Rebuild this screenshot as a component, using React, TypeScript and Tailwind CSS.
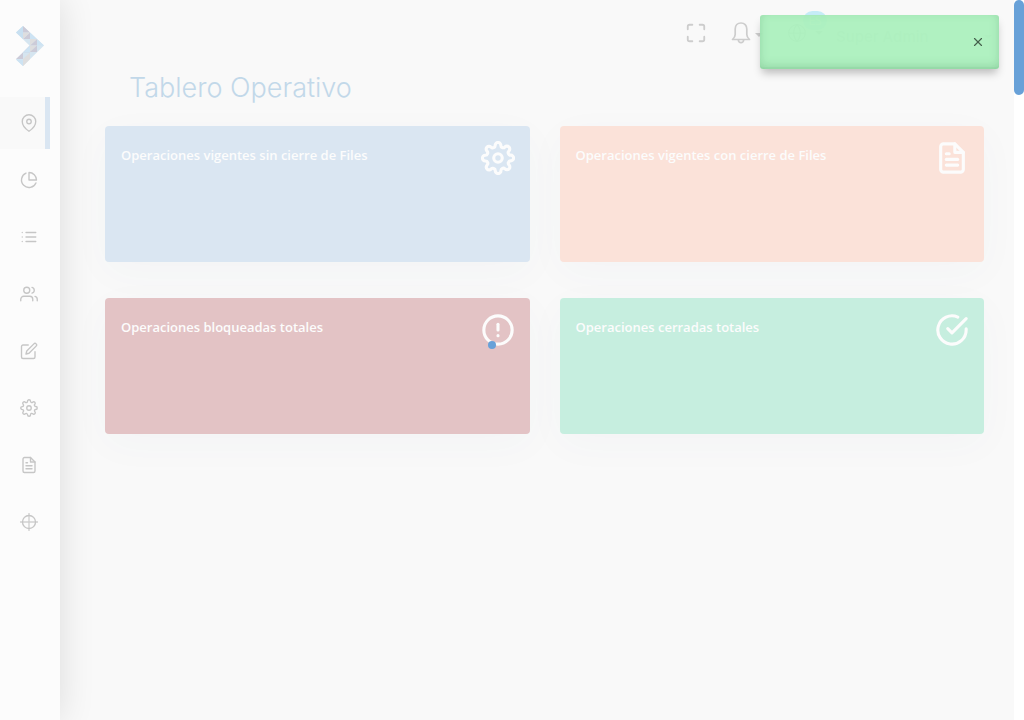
import type { IconType } from "react-icons";
import {
  FiAlertCircle,
  FiCheckCircle,
  FiEdit,
  FiFileText,
  FiGlobe,
  FiList,
  FiMapPin,
  FiMaximize,
  FiPieChart,
  FiSettings,
  FiUsers,
  FiX,
} from "react-icons/fi";

type NavIcon = (props: { size?: number; strokeWidth?: number }) => React.ReactNode;

function Target({ size = 18, strokeWidth = 2 }: { size?: number; strokeWidth?: number }) {
  return (
    <svg viewBox="0 0 24 24" width={size} height={size} fill="none" stroke="currentColor" strokeWidth={strokeWidth} aria-hidden="true">
      <circle cx="12" cy="12" r="8.700" />
      <path d="M12 0v24M0 12h24" opacity="0.8" />
    </svg>
  );
}

const navItems: { label: string; icon: IconType | NavIcon }[] = [
  { label: "Tablero", icon: FiMapPin },
  { label: "Reportes", icon: FiPieChart },
  { label: "Listados", icon: FiList },
  { label: "Usuarios", icon: FiUsers },
  { label: "Edición", icon: FiEdit },
  { label: "Configuración", icon: FiSettings },
  { label: "Archivos", icon: FiFileText },
  { label: "Seguimiento", icon: Target },
];

const cards: { title: string; icon: IconType; color: string }[] = [
  { title: "Operaciones vigentes sin cierre de Files", icon: FiSettings, color: "bg-[#dae6f2]" },
  { title: "Operaciones vigentes con cierre de Files", icon: FiFileText, color: "bg-[#fbe2d9]" },
  { title: "Operaciones bloqueadas totales", icon: FiAlertCircle, color: "bg-[#e3c3c5]" },
  { title: "Operaciones cerradas totales", icon: FiCheckCircle, color: "bg-[#c6eedf]" },
];

function Logo() {
  return (
    <svg viewBox="0 0 28 40" className="h-10 w-7" aria-hidden="true">
      <path d="M0 6.500 7 0 28 19.500 7 40 0 33.500 13.500 19.500z" fill="#d5e5f0" />
      <path d="M7 0v13l-7-6.500z" fill="#c8e0f1" />
      <path d="M7 0 14 6.500H7zM14 6.500V13H7zM14 19.500 21 13V19.500zM14 19.500 7 26.500H14zM7 26.500V33H0z" fill="#cccbd8" />
      <path d="M7 6.500H14L7 13zM14 13H21L14 19.500zM14 19.500H21L14 26.500zM7 33 14 26.500V33zM7 33H14L7 40z" fill="#dededf" />
      <path d="M14 6.500 21 13H14zM21 13 28 19.500H21zM7 26.500 14 19.500V26.500zM0 33.500H7V40z" fill="#cde3f3" />
      <path d="M21 19.500V26H14z" fill="#cccbd8" />
    </svg>
  );
}

function Bell() {
  return (
    <svg viewBox="0 0 20 22" width="20" height="22" fill="none" stroke="currentColor" strokeWidth="1.700" strokeLinejoin="round" aria-hidden="true">
      <path d="M10 1C6.500 1 4.200 3.500 4.200 7v5.500c0 2.200-1.200 3.600-2.700 5h17c-1.500-1.400-2.700-2.800-2.700-5V7c0-3.500-2.300-6-5.800-6zM7.300 18c.2 1.600 1.200 2.700 2.700 2.700s2.500-1.100 2.700-2.700" />
    </svg>
  );
}

function Caret() {
  return (
    <svg viewBox="0 0 8 4" className="h-1 w-2" aria-hidden="true">
      <path d="M0 0h8L4 4z" fill="currentColor" />
    </svg>
  );
}

function Sidebar() {
  return (
    <aside className="z-10 w-[60px] shrink-0 bg-[#fcfcfc] shadow-[0_0_36px_rgba(0,0,0,0.12)]">
      <a href="#inicio" aria-label="Inicio" className="flex h-[92px] items-center justify-center">
        <Logo />
      </a>
      <nav aria-label="Principal" className="mt-[5px] flex w-[50px] flex-col gap-[5px]">
        {navItems.map(({ label, icon: Icon }, i) => (
          <a
            key={label}
            href={`#${label}`}
            aria-label={label}
            className={
              i === 0
                ? "flex h-[52px] items-center border-r-[5px] border-[#dae6f2] bg-[#f9f9f9] pl-5 text-[#c6c6c6]"
                : "flex h-[52px] items-center pl-5 text-[#c6c6c6]"
            }
          >
            <Icon size={18} strokeWidth={1.8} />
          </a>
        ))}
      </nav>
    </aside>
  );
}

function Header() {
  return (
    <header className="flex h-[66px] items-center justify-end pr-[22px] text-[#cdcdcd]">
      <button type="button" aria-label="Pantalla completa">
        <FiMaximize size={22} />
      </button>
      <button type="button" aria-label="Notificaciones" className="ml-6 flex items-center gap-1">
        <Bell />
        <span className="pt-1"><Caret /></span>
      </button>
      <span className="ml-2 h-4 w-px bg-[#f0f0f0]" />
      <button type="button" aria-label="Idioma" className="relative ml-[15px] flex items-center gap-2">
        <FiGlobe size={20} strokeWidth={1.5} />
        <span className="absolute -top-3 left-4 flex h-[19px] w-6 items-center justify-center rounded-full bg-[#c5ecf7] text-xs text-white">
          ES
        </span>
        <Caret />
      </button>
      <button type="button" className="ml-[13px] flex w-[156px] items-center justify-between pt-2 font-['Inter',sans-serif] text-[15px] font-medium text-[#d8d8d8]">
        Super Admin
        <Caret />
      </button>
    </header>
  );
}

export default function App() {
  return (
    <div className="flex min-h-screen bg-[#f9f9f9] font-['Open_Sans','Noto_Sans',sans-serif]">
      <Sidebar />
      <div className="min-w-0 flex-1">
        <Header />
        <main className="pr-[30px] pl-[45px]">
          <h1 className="pt-px pl-6 font-['Inter','Lato',sans-serif] text-[27px] leading-[42px] font-light text-[#c2d8e9]">
            Tablero Operativo
          </h1>
          <div className="mt-[17px] grid grid-cols-2 gap-x-[30px] gap-y-9">
            {cards.map(({ title, icon: Icon, color }) => (
              <section
                key={title}
                className={`flex h-[136px] items-start justify-between rounded pt-[15px] pr-[15px] pl-4 text-[#fcfcfc] shadow-[0_10px_40px_rgba(62,107,131,0.03)] ${color}`}
              >
                <h2 className="pt-1 text-[13px] leading-5 font-semibold">{title}</h2>
                <Icon size={34} strokeWidth={2.2} className="shrink-0" aria-hidden="true" />
              </section>
            ))}
          </div>
        </main>
      </div>
      <div className="w-2.5 shrink-0 bg-white">
        <div className="h-[95px] rounded-full bg-[#68a1d8]" />
      </div>
      <div role="status" aria-label="Cargando" className="pointer-events-none fixed inset-y-0 right-2.5 left-0 z-20 flex items-center justify-center">
        <div className="size-[38px]">
          <div className="size-2 rounded-full bg-[#68a1d8]" />
        </div>
      </div>
      <div
        role="alert"
        className="fixed top-[15px] right-[25px] z-30 flex h-[54px] w-[239px] items-center justify-end rounded-[3px] bg-[#abf0bd]/94 pr-3.5 shadow-[inset_0_-2px_0_rgba(80,160,100,0.08),inset_0_-3px_10px_rgba(60,130,80,0.25),0_6px_9px_-2px_rgba(0,0,0,0.25)]"
      >
        <button type="button" aria-label="Cerrar" className="text-[#45604c]">
          <FiX size={14} strokeWidth={2} />
        </button>
      </div>
    </div>
  );
}
